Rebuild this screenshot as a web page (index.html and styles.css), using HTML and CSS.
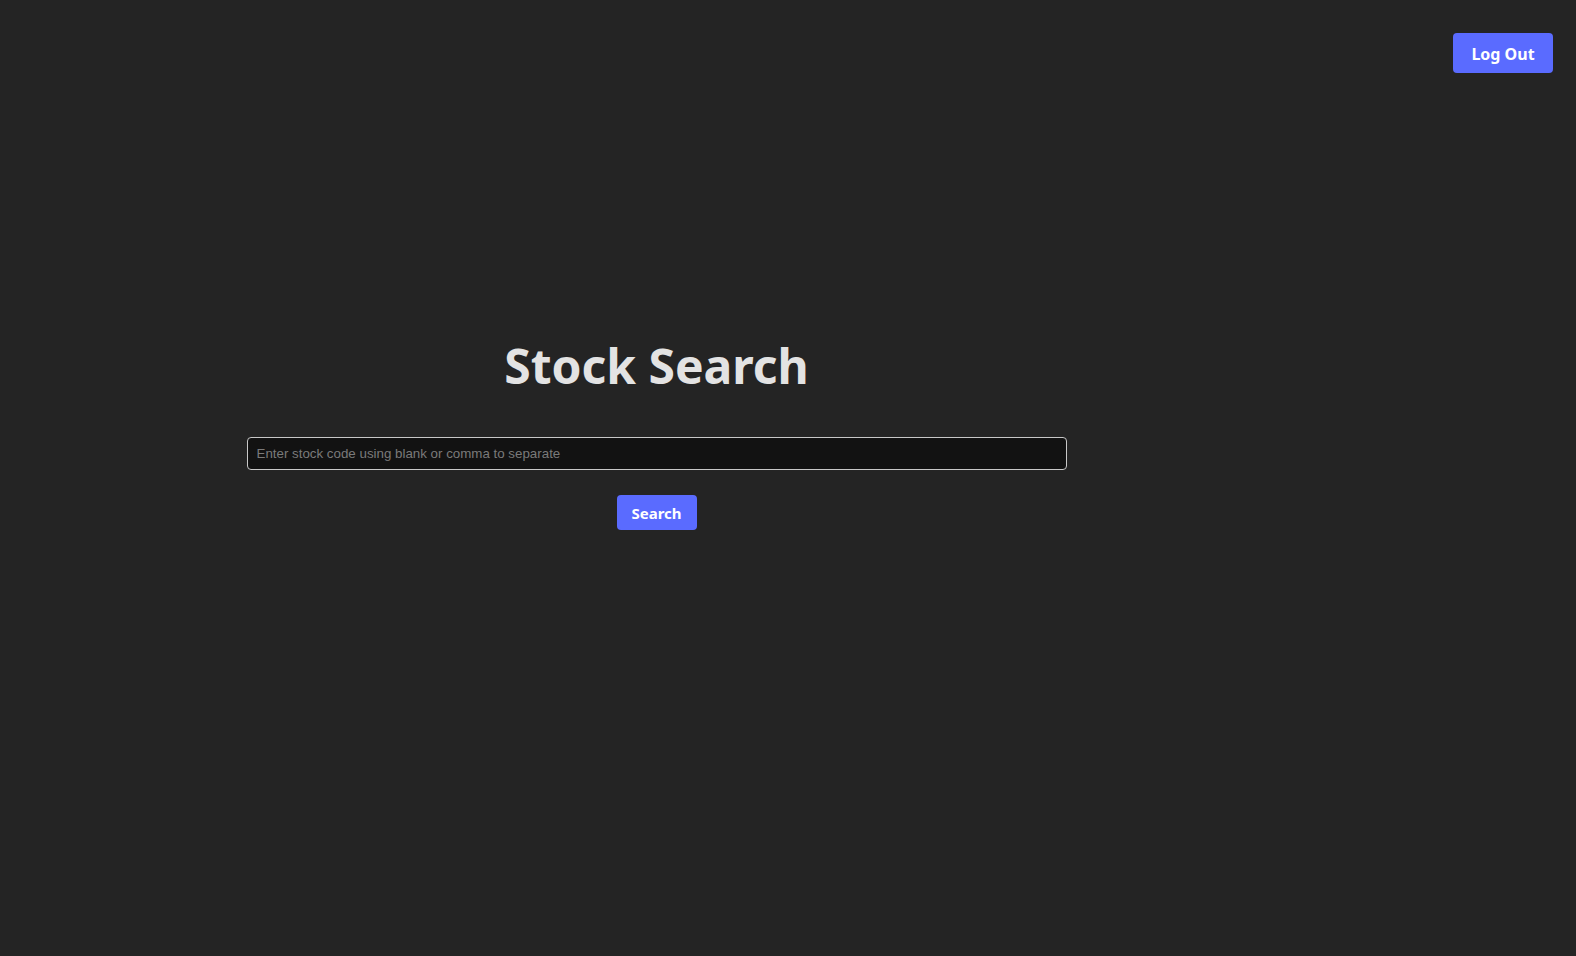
FILE: index.html
```html
<!DOCTYPE html>
<html lang="en">
<head>
<meta charset="utf-8">
<title>Stock Search</title>
<link rel="stylesheet" href="styles.css">
</head>
<body>
<header class="topbar">
  <button class="btn btn-logout">Log Out</button>
</header>
<main class="main">
  <h1 class="title">Stock Search</h1>
  <input class="search-input" type="text" placeholder="Enter stock code using blank or comma to separate">
  <button class="btn btn-search">Search</button>
</main>
</body>
</html>
```
FILE: styles.css
```css
html, body {
  margin: 0;
  padding: 0;
  background: #242424;
  height: 100%;
}
body {
  font-family: "Noto Sans", "Open Sans", sans-serif;
  color: #e3e3e3;
}
.topbar {
  display: flex;
  justify-content: flex-end;
  padding: 33px 23px 0 0;
}
.btn {
  font-family: "Noto Sans", "Open Sans", sans-serif;
  font-weight: 700;
  color: #ffffff;
  background: #5a6bff;
  border: none;
  border-radius: 4px;
  cursor: pointer;
}
.btn-logout {
  width: 100px;
  height: 40px;
  font-size: 16px;
  padding-top: 2px;
}
.main {
  width: 1313px;
  display: flex;
  flex-direction: column;
  align-items: center;
  padding-top: 263px;
}
.title {
  margin: 0;
  font-size: 48px;
  font-weight: 700;
  line-height: 60px;
  color: #e3e3e3;
}
.search-input {
  box-sizing: border-box;
  width: 820px;
  height: 33px;
  margin-top: 41px;
  padding: 0 9px;
  background: #121212;
  border: 1px solid #c8c8c8;
  border-radius: 4px;
  color: #e3e3e3;
  font-family: "Liberation Sans", Arial, sans-serif;
  font-size: 13.333px;
  outline: none;
}
.search-input::placeholder {
  color: #7a7a7a;
}
.btn-search {
  margin-top: 25px;
  width: 80px;
  height: 35px;
  font-size: 15px;
}
```
